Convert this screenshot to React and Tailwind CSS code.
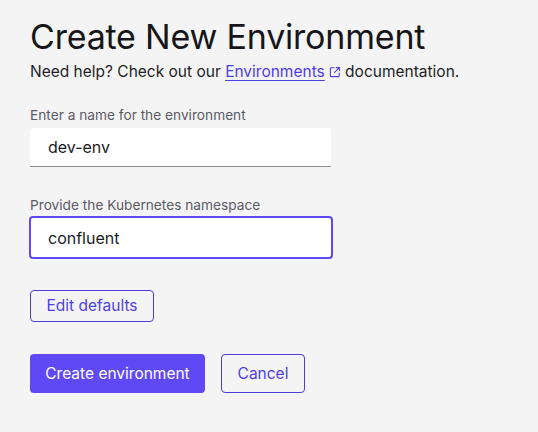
import React, { useState } from "react";

function ExternalIcon() {
  return (
    <svg
      viewBox="0 0 12 12"
      className="inline-block w-[12px] h-[12px] ml-[4px] align-[-1px]"
      fill="none"
      stroke="currentColor"
      strokeWidth="1.1"
      strokeLinecap="round"
      strokeLinejoin="round"
    >
      <path d="M5 1.8H2.2a.8.8 0 0 0-.8.8v7.2a.8.8 0 0 0 .8.8h7.2a.8.8 0 0 0 .8-.8V7" />
      <path d="M7.2 1.6h3.2v3.2" />
      <path d="M10.2 1.8 5.6 6.4" />
    </svg>
  );
}

export default function App() {
  const [name, setName] = useState("dev-env");
  const [namespace, setNamespace] = useState("confluent");

  return (
    <div className="min-h-[432px] bg-[#f4f4f4] px-[30px] pt-[17px] font-['Inter',sans-serif] text-[#1a1a1f]">
      <h1 className="text-[34px] leading-[40px] font-normal tracking-[-0.2px] text-[#16161a]">
        Create New Environment
      </h1>
      <p className="mt-[4px] text-[15.5px] leading-[22px] text-[#1f1f24]">
        Need help? Check out our{" "}
        <a href="#" className="text-[#4f3ee6] underline underline-offset-[3px] decoration-[1px]">
          Environments
        </a>
        <span className="text-[#4f3ee6]">
          <ExternalIcon />
        </span>{" "}
        documentation.
      </p>

      {/* Name field */}
      <label className="block mt-[23px] text-[13.7px] leading-[18px] text-[#5b5b66]">
        Enter a name for the environment
      </label>
      <input
        value={name}
        onChange={(e) => setName(e.target.value)}
        className="block mt-[4px] w-[301px] h-[39px] bg-white rounded-t-[4px] border-b border-[#8e8e99] px-[18px] text-[16px] text-[#1a1a1f] outline-none"
      />

      {/* Namespace field */}
      <label className="block mt-[29px] text-[13.7px] leading-[18px] text-[#5b5b66]">
        Provide the Kubernetes namespace
      </label>
      <input
        value={namespace}
        onChange={(e) => setNamespace(e.target.value)}
        className="block mt-[2px] -ml-px w-[304px] h-[43px] bg-white rounded-[4px] border-2 border-[#5e49f5] px-[17px] text-[16px] text-[#1a1a1f] outline-none"
      />

      <button className="block mt-[31px] w-[124px] h-[32px] rounded-[4px] border border-[#4d3dd6] text-[15.5px] text-[#4f3ee6] bg-transparent">
        Edit defaults
      </button>

      <div className="flex gap-[16px] mt-[32px]">
        <button className="w-[175px] h-[39px] rounded-[4px] bg-[#5f49f6] text-white text-[15.5px]">
          Create environment
        </button>
        <button className="w-[84px] h-[39px] rounded-[4px] border border-[#4d3dd6] text-[#4f3ee6] text-[15.5px] bg-transparent">
          Cancel
        </button>
      </div>
    </div>
  );
}
